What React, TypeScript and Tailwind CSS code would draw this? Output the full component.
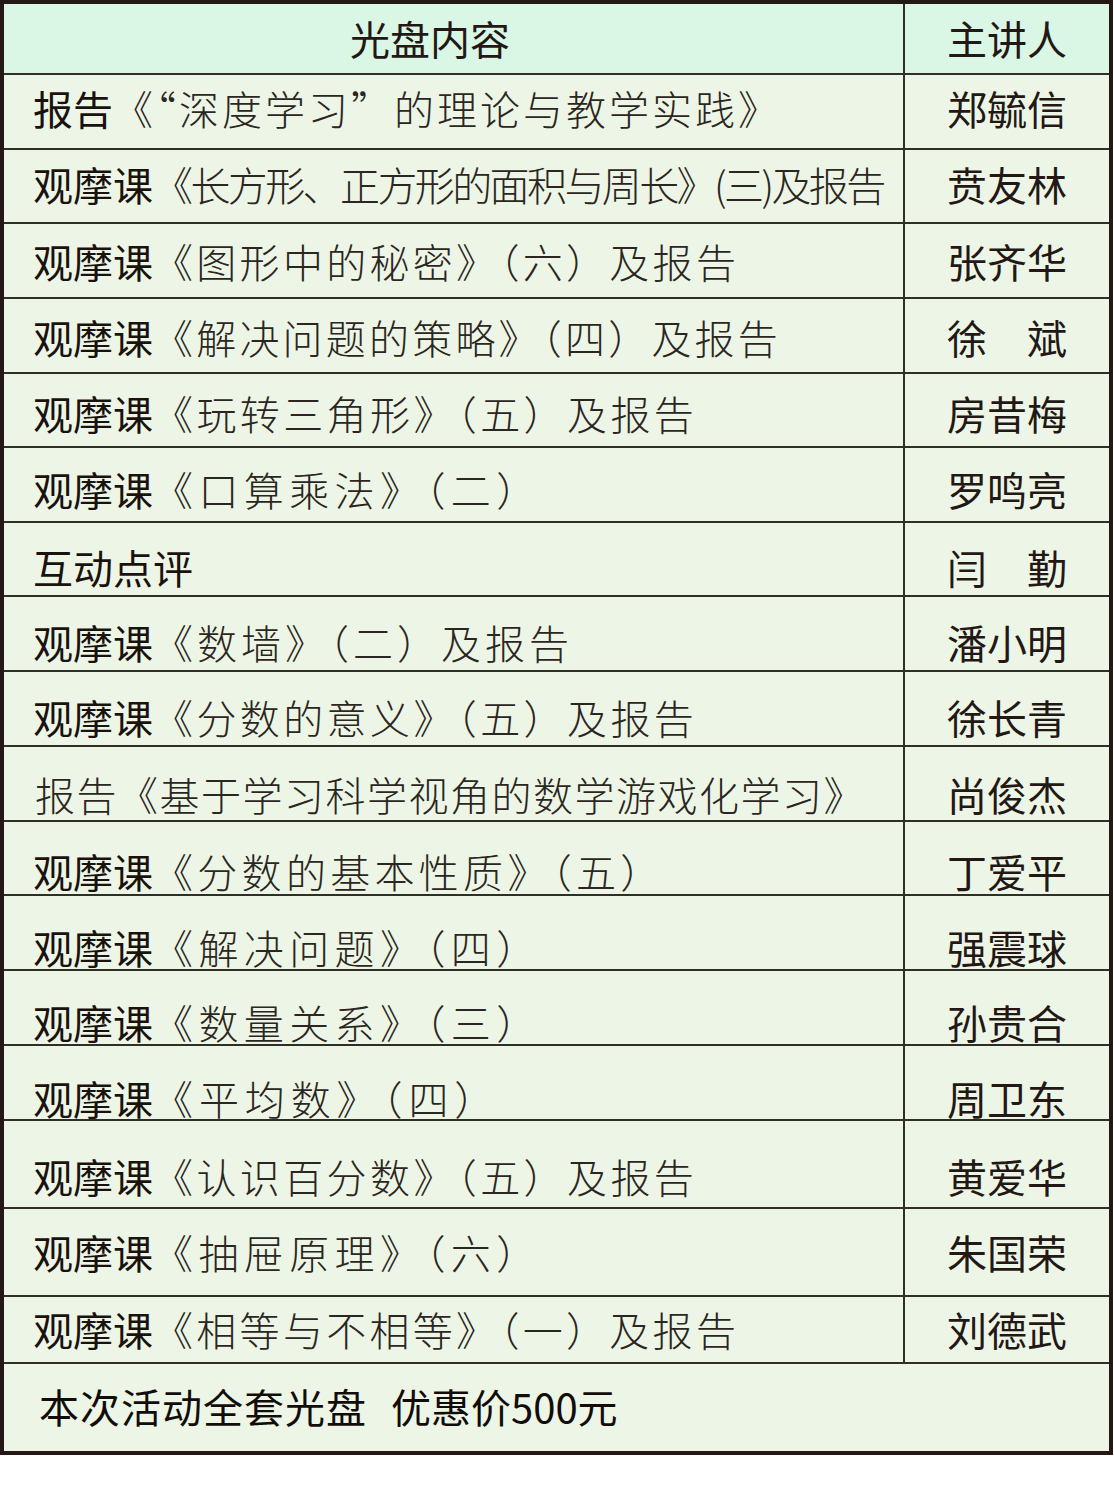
type Row = {
  pre?: string
  title: string
  name: string
  h: string
  shift: string
  track: string
  pl?: string
}

const rows: Row[] = [
  { pre: '报告', title: '《“深度学习”的理论与教学实践》', name: '郑毓信', h: 'h-[75px]', shift: 'pb-[7px]', track: 'tracking-[3px]' },
  { pre: '观摩课', title: '《长方形、正方形的面积与周长》(三)及报告', name: '贲友林', h: 'h-[74px]', shift: 'pb-[4px]', track: 'tracking-[-2.6px]' },
  { pre: '观摩课', title: '《图形中的秘密》（六）及报告', name: '张齐华', h: 'h-[75px]', shift: 'pt-[0px]', track: 'tracking-[3.3px]' },
  { pre: '观摩课', title: '《解决问题的策略》（四）及报告', name: '徐　斌', h: 'h-[75px]', shift: 'pt-[2px]', track: 'tracking-[3.2px]' },
  { pre: '观摩课', title: '《玩转三角形》（五）及报告', name: '房昔梅', h: 'h-[74px]', shift: 'pt-[5px]', track: 'tracking-[3.4px]' },
  { pre: '观摩课', title: '《口算乘法》（二）', name: '罗鸣亮', h: 'h-[75px]', shift: 'pt-[9px]', track: 'tracking-[5.4px]' },
  { pre: '互动点评', title: '', name: '闫　勤', h: 'h-[74px]', shift: 'pt-[15px]', track: 'tracking-[0px]' },
  { pre: '观摩课', title: '《数墙》（二）及报告', name: '潘小明', h: 'h-[75px]', shift: 'pt-[16px]', track: 'tracking-[4px]' },
  { pre: '观摩课', title: '《分数的意义》（五）及报告', name: '徐长青', h: 'h-[75px]', shift: 'pt-[17px]', track: 'tracking-[3.4px]' },
  { title: '报告《基于学习科学视角的数学游戏化学习》', name: '尚俊杰', h: 'h-[75px]', shift: 'pt-[21px]', track: 'tracking-[1.5px]', pl: 'pl-[31px]' },
  { pre: '观摩课', title: '《分数的基本性质》（五）', name: '丁爱平', h: 'h-[74px]', shift: 'pt-[25px]', track: 'tracking-[4.3px]' },
  { pre: '观摩课', title: '《解决问题》（四）', name: '强震球', h: 'h-[75px]', shift: 'pt-[28px]', track: 'tracking-[5.4px]' },
  { pre: '观摩课', title: '《数量关系》（三）', name: '孙贵合', h: 'h-[75px]', shift: 'pt-[29px]', track: 'tracking-[5.4px]' },
  { pre: '观摩课', title: '《平均数》（四）', name: '周卫东', h: 'h-[75px]', shift: 'pt-[31px]', track: 'tracking-[5.9px]' },
  { pre: '观摩课', title: '《认识百分数》（五）及报告', name: '黄爱华', h: 'h-[88px]', shift: 'pt-[24px]', track: 'tracking-[3.4px]' },
  { pre: '观摩课', title: '《抽屉原理》（六）', name: '朱国荣', h: 'h-[88px]', shift: 'pb-[1px]', track: 'tracking-[5.4px]' },
  { pre: '观摩课', title: '《相等与不相等》（一）及报告', name: '刘德武', h: 'h-[67px]', shift: 'pb-[1px]', track: 'tracking-[3.3px]' },
]

export default function App() {
  return (
    <div className="min-h-screen bg-white font-['Noto_Sans_CJK_SC',sans-serif] text-[#231815]">
      <div className="w-[1113px] border-4 border-[#231815] bg-[#edf6e6]">
        {/* header */}
        <div className="flex h-[71px] border-b-2 border-[#2f2f27] bg-[#daf6e4]">
          <div className="flex w-[901px] items-center border-r-2 border-[#2f2f27] pb-[1px] pl-[346px] text-[40px] leading-none">
            光盘内容
          </div>
          <div className="flex flex-1 items-center justify-center pb-[1px] text-[40px] leading-none">主讲人</div>
        </div>

        {rows.map((r, i) => (
          <div key={i} className={`flex border-b-2 border-[#2f2f27] ${r.h}`}>
            <div
              className={`flex w-[901px] items-center whitespace-nowrap border-r-2 border-[#2f2f27] text-[40px] leading-none ${r.pl ?? 'pl-[29px]'} ${r.shift}`}
            >
              {r.pre && <span className="font-normal text-[#1a120e]">{r.pre}</span>}
              {r.title && <span className={`font-light text-[#2b2622] ${r.track}`}>{r.title}</span>}
            </div>
            <div className={`flex flex-1 items-center justify-center text-[40px] leading-none ${r.shift}`}>
              {r.name}
            </div>
          </div>
        ))}

        {/* footer */}
        <div className="flex h-[87px] items-center pb-[4px] pl-[35px] text-[40px] font-normal leading-none text-[#120d0a]">
          <span className="tracking-[1px]">本次活动全套光盘</span>
          <span className="ml-[24px]">优惠价500元</span>
        </div>
      </div>
    </div>
  )
}
